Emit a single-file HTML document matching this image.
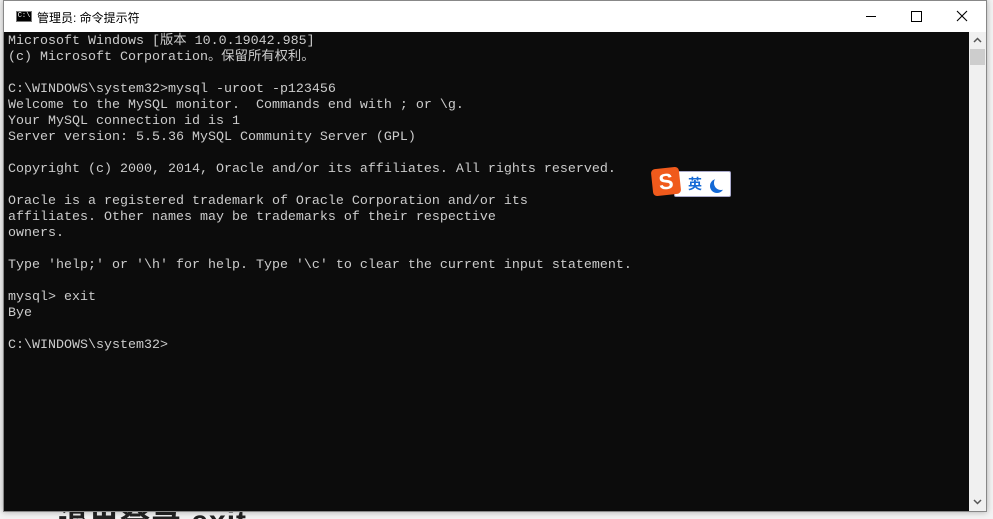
<!DOCTYPE html><html><head><meta charset="utf-8"><style>
html,body{margin:0;width:993px;height:519px;overflow:hidden}
body{background:#f3f3f3;position:relative;font-family:"Liberation Sans","Noto Sans CJK SC",sans-serif}
.bgtxt{position:absolute;left:58px;top:496px;font-size:30px;font-weight:bold;color:#222;letter-spacing:1px}
.win{position:absolute;left:3px;top:0;width:982px;height:510px;background:#fff;border:1px solid #888;box-shadow:0 0 6px rgba(0,0,0,.3)}
.title{position:absolute;left:0;top:0;width:982px;height:31px;background:#fff}
.title .t{position:absolute;left:33px;top:8px;font-size:12px;color:#000}
.con{position:absolute;left:0;top:31px;width:965px;height:479px;background:#0c0c0c}
pre{margin:0;position:absolute;left:4px;top:2px;color:#ccc;font:13.33px/16px "Liberation Mono","Noto Sans CJK SC",monospace}
.sb{position:absolute;left:965px;top:31px;width:17px;height:479px;background:#f0f0f0}
</style></head><body>
<div class="bgtxt">退出登录 exit</div>
<div class="win">
<div class="title">
<div style="position:absolute;left:12px;top:10px;width:16px;height:11px;background:#000;border:1px solid #777;box-sizing:border-box;color:#fff;font:7px/9px 'Liberation Mono';text-align:center">C:\</div>
<div class="t">管理员: 命令提示符</div>
<div style="position:absolute;left:862px;top:15px;width:10px;height:1px;background:#000"></div>
<div style="position:absolute;left:907px;top:10px;width:9px;height:9px;border:1px solid #000"></div>
<svg style="position:absolute;left:952px;top:9px" width="12" height="12"><path d="M1 1L11 11M11 1L1 11" stroke="#000" stroke-width="1.1"/></svg>
</div>
<div class="con"><pre>Microsoft Windows [版本 10.0.19042.985]
(c) Microsoft Corporation。保留所有权利。

C:\WINDOWS\system32>mysql -uroot -p123456
Welcome to the MySQL monitor.  Commands end with ; or \g.
Your MySQL connection id is 1
Server version: 5.5.36 MySQL Community Server (GPL)

Copyright (c) 2000, 2014, Oracle and/or its affiliates. All rights reserved.

Oracle is a registered trademark of Oracle Corporation and/or its
affiliates. Other names may be trademarks of their respective
owners.

Type 'help;' or '\h' for help. Type '\c' to clear the current input statement.

mysql> exit
Bye

C:\WINDOWS\system32></pre>
<div style="position:absolute;left:670px;top:139px;width:55px;height:24px;background:#fff;border:1px solid #aac;border-radius:2px"></div>
<div style="position:absolute;left:648px;top:136px;width:28px;height:27px;background:#f05a1c;border-radius:4px;transform:rotate(-6deg);color:#fff;font:bold 22px/27px 'Liberation Sans';text-align:center">S</div>
<div style="position:absolute;left:684px;top:142px;color:#1469d6;font-weight:bold;font-size:14px">英</div>
<div style="position:absolute;left:710px;top:144px;width:14px;height:14px;border-radius:50%;box-shadow:-4px 3px 0 0 #1469d6"></div>
</div>
<div class="sb">
<svg style="position:absolute;left:4px;top:5px" width="9" height="6"><path d="M1 5L4.5 1.5L8 5" stroke="#555" stroke-width="1.5" fill="none"/></svg>
<div style="position:absolute;left:1px;top:17px;width:15px;height:16px;background:#cdcdcd"></div>
<svg style="position:absolute;left:4px;top:467px" width="9" height="6"><path d="M1 1L4.5 4.5L8 1" stroke="#555" stroke-width="1.5" fill="none"/></svg>
</div>
</div>
</body></html>
